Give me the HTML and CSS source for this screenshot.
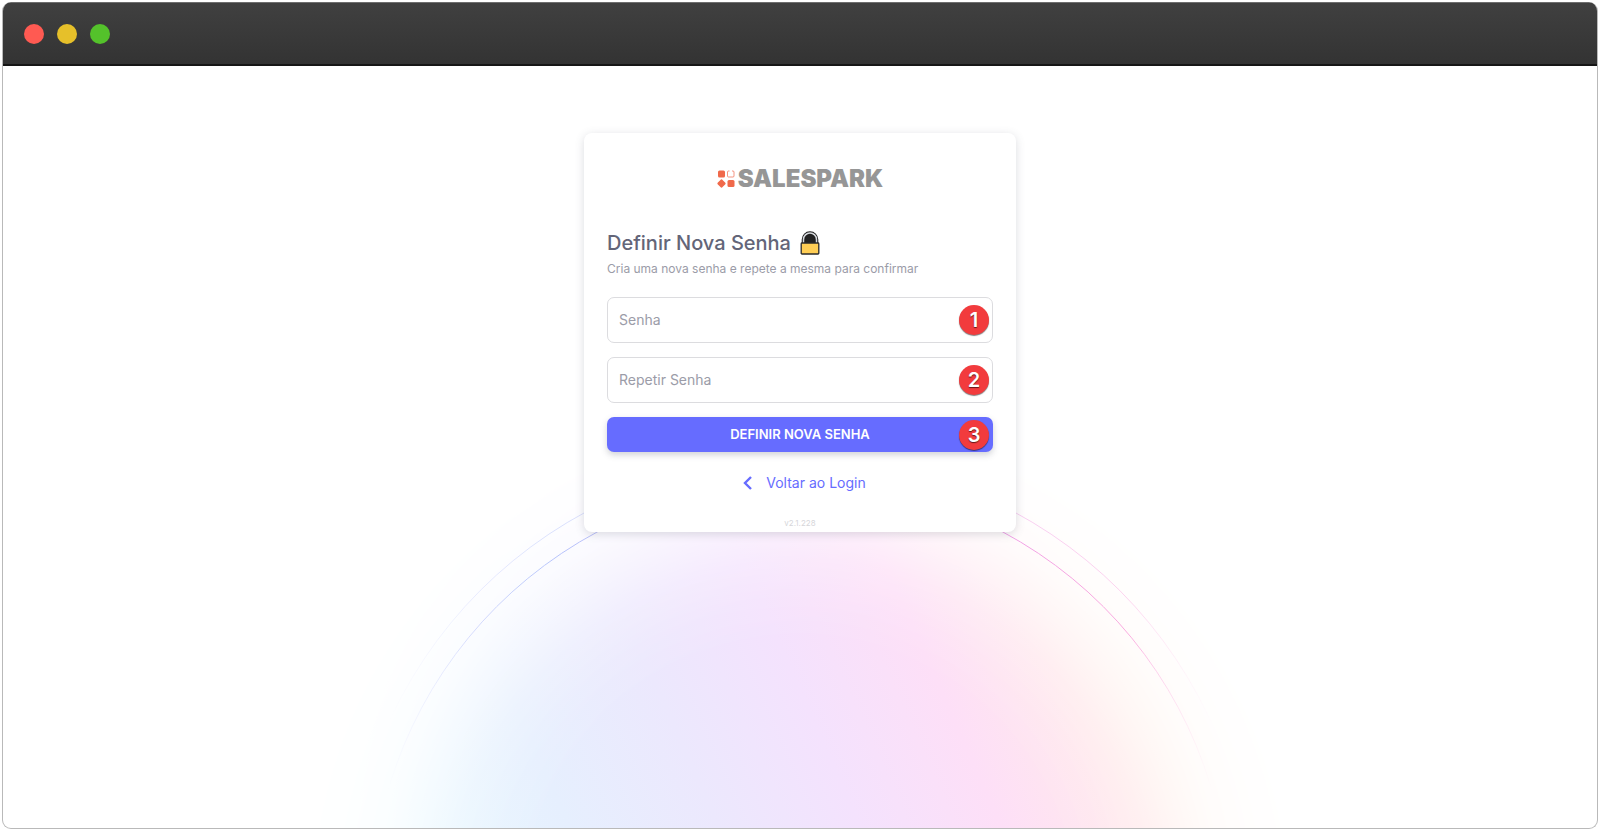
FILE: index.html
```html
<!DOCTYPE html>
<html lang="pt">
<head>
  <meta charset="UTF-8" />
  <meta name="viewport" content="width=device-width, initial-scale=1.0"/>
  <title>Definir Nova Senha</title>
  <link rel="stylesheet" href="styles.css">
</head>
<body>
  <div class="window">
    <header class="titlebar">
      <span class="dot red"></span>
      <span class="dot yellow"></span>
      <span class="dot green"></span>
    </header>

    <main class="stage">
      <svg class="glow" viewBox="0 0 1040 440" aria-hidden="true">
        <defs>
          <linearGradient id="tint" gradientUnits="userSpaceOnUse" x1="192" y1="668" x2="886" y2="360">
            <stop offset="0" stop-color="#e8faff"/>
            <stop offset="0.24" stop-color="#e6effe"/>
            <stop offset="0.42" stop-color="#ece8fd"/>
            <stop offset="0.59" stop-color="#f4e2fd"/>
            <stop offset="0.76" stop-color="#fddff7"/>
            <stop offset="0.91" stop-color="#ffe8ec"/>
            <stop offset="1" stop-color="#ffefe8"/>
          </linearGradient>
          <radialGradient id="fade" gradientUnits="userSpaceOnUse" cx="520" cy="522" r="500">
            <stop offset="0.54" stop-color="#fff"/>
            <stop offset="0.62" stop-color="#fff" stop-opacity="0.9"/>
            <stop offset="0.7" stop-color="#fff" stop-opacity="0.72"/>
            <stop offset="0.77" stop-color="#fff" stop-opacity="0.45"/>
            <stop offset="0.84" stop-color="#fff" stop-opacity="0.2"/>
            <stop offset="0.92" stop-color="#fff" stop-opacity="0.07"/>
            <stop offset="1" stop-color="#fff" stop-opacity="0"/>
          </radialGradient>
          <linearGradient id="line" gradientUnits="userSpaceOnUse" x1="90" y1="0" x2="950" y2="0">
            <stop offset="0.02" stop-color="#e4e6ff" stop-opacity="0"/>
            <stop offset="0.12" stop-color="#d5dcfd"/>
            <stop offset="0.22" stop-color="#b6c3fb"/>
            <stop offset="0.74" stop-color="#f0a0e6"/>
            <stop offset="0.88" stop-color="#faaadf"/>
            <stop offset="0.98" stop-color="#ffd5ee" stop-opacity="0"/>
          </linearGradient>
          <mask id="disc">
            <rect width="1040" height="440" fill="url(#fade)"/>
          </mask>
        </defs>
        <rect width="1040" height="440" fill="url(#tint)" mask="url(#disc)"/>
        <circle cx="520" cy="522" r="429" fill="none" stroke="url(#line)"/>
        <circle cx="520" cy="522" r="452" fill="none" stroke="url(#line)" opacity="0.5"/>
      </svg>

      <section class="card">
        <div class="logo">
          <svg class="logo-mark" viewBox="0 0 18 18" aria-hidden="true">
            <rect x="1" y="0.5" width="7" height="7" rx="1.5" fill="#f0694a"/>
            <path d="M12.5 1H11.5Q10.5 1 10.5 2V6Q10.5 7 11.5 7H16Q17 7 17 6V2Q17 1 16 1H15" fill="none" stroke="#f0694a" stroke-width="0.7"/>
            <rect x="1.2" y="10.2" width="6.6" height="6.6" rx="1.5" fill="#f0694a" transform="rotate(45 4.5 13.5)"/>
            <rect x="10.5" y="10" width="7" height="7" rx="1.5" fill="#f0694a"/>
          </svg>
          <span>SALESPARK</span>
        </div>

        <h1 class="title">
          Definir Nova Senha
          <svg class="lock" viewBox="0 0 20 24" aria-hidden="true">
            <path d="M3.5 12V8.5a6.500 6.500 0 0 1 13 0V12" fill="#222" stroke="#1d1d1d" stroke-width="3.6"/>
            <path d="M3.5 12V8.5a6.500 6.500 0 0 1 13 0V12" fill="none" stroke="#d5d8dc" stroke-width="1.5"/>
            <rect x="1.2" y="12" width="17.6" height="11" rx="0.8" fill="#ffce55" stroke="#2b2b2b" stroke-width="1.3"/>
          </svg>
        </h1>
        <p class="subtitle">Cria uma nova senha e repete a mesma para confirmar</p>

        <form class="form">
          <div class="field">
            <input type="password" id="senha">
            <label for="senha">Senha</label>
            <span class="badge">1</span>
          </div>
          <div class="field">
            <input type="password" id="repetir">
            <label for="repetir">Repetir Senha</label>
            <span class="badge">2</span>
          </div>
          <div class="field">
            <button type="submit" class="submit">DEFINIR NOVA SENHA</button>
            <span class="badge">3</span>
          </div>
        </form>

        <a class="back" href="#">
          <svg class="chevron" viewBox="0 0 24 24" aria-hidden="true">
            <path d="M17 6L11 12L17 18" fill="none" stroke="#666cff" stroke-width="2.4"/>
          </svg>
          Voltar ao Login
        </a>
        <p class="version">v2.1.228</p>
      </section>
    </main>
  </div>
</body>
</html>
```
FILE: styles.css
```css
* {
  box-sizing: border-box;
}
body {
  margin: 0;
  padding: 2px;
  background: #fff;
  font-family: Inter, "Liberation Sans", sans-serif;
}
.window {
  display: flex;
  flex-direction: column;
  height: calc(100vh - 4px);
  border: 1px solid #b9b9b9;
  border-top: 0;
  border-radius: 9px;
  overflow: hidden;
}
.titlebar {
  display: flex;
  align-items: center;
  gap: 13px;
  flex: none;
  height: 64px;
  padding: 0 21px;
  background: linear-gradient(#404040, #333);
  border-top: 1px solid #6e6e6e;
  border-bottom: 2px solid #161616;
}
.dot {
  width: 20px;
  height: 20px;
  border-radius: 50%;
}
.red {
  background: #ff5a52;
}
.yellow {
  background: #e6c02a;
}
.green {
  background: #54c22b;
}
.stage {
  position: relative;
  flex: 1;
  padding-top: 67px;
}
.glow {
  position: absolute;
  bottom: 0;
  left: 50%;
  width: 1040px;
  height: 440px;
  transform: translateX(-50%);
}
.card {
  position: relative;
  display: flex;
  flex-direction: column;
  width: 432px;
  max-width: 100%;
  margin: 0 auto;
  padding: 36px 23px 4px;
  background: #fff;
  border-radius: 8px;
  box-shadow: 0 2px 10px rgba(76, 78, 100, 0.2);
}
.logo {
  display: flex;
  align-items: center;
  justify-content: center;
  gap: 3px;
  height: 20px;
  color: #969696;
  font-size: 24px;
  font-weight: 900;
  line-height: 20px;
}
.logo-mark {
  width: 18px;
  height: 18px;
}
.title {
  display: flex;
  align-items: center;
  gap: 9px;
  margin: 40px 0 0;
  color: #636578;
  font-size: 20px;
  font-weight: 500;
  line-height: 28px;
}
.lock {
  width: 20px;
  height: 24px;
}
.subtitle {
  margin: 3px 0 19px;
  color: #9b9ca8;
  font-size: 12px;
  line-height: 18px;
}
.form {
  display: grid;
  gap: 14px;
}
.field {
  position: relative;
}
.field input {
  display: block;
  width: 100%;
  height: 46px;
  padding: 0 48px 0 12px;
  border: 1px solid #dcdcdf;
  border-radius: 7px;
  background: #fff;
  font: inherit;
}
.field label {
  position: absolute;
  top: 0;
  left: 12px;
  color: #9b9ca8;
  font-size: 14px;
  line-height: 46px;
}
.badge {
  position: absolute;
  top: 50%;
  right: 4px;
  width: 30px;
  height: 30px;
  border-radius: 50%;
  background: #f23b3d;
  box-shadow: 0 1px 1px rgba(0, 0, 0, 0.5);
  color: #fff;
  font-size: 20px;
  font-weight: 600;
  line-height: 30px;
  text-align: center;
  text-shadow: 0 1px 1px rgba(0, 0, 0, 0.6);
  transform: translateY(-50%);
}
.submit {
  display: block;
  width: 100%;
  height: 35px;
  padding: 0 0 2px;
  border: 0;
  border-radius: 7px;
  background: #666cff;
  box-shadow: 0 3px 6px rgba(76, 78, 100, 0.25);
  color: #fff;
  font: 600 13px/20px Inter, "Liberation Sans", sans-serif;
}
.back {
  display: flex;
  align-items: center;
  align-self: center;
  gap: 8px;
  margin-top: 19px;
  color: #666cff;
  font-size: 14px;
  line-height: 24px;
  text-decoration: none;
}
.chevron {
  width: 24px;
  height: 24px;
}
.version {
  margin: 23px 0 0;
  color: #d6d6da;
  font-size: 8px;
  line-height: 10px;
  text-align: center;
}
```
